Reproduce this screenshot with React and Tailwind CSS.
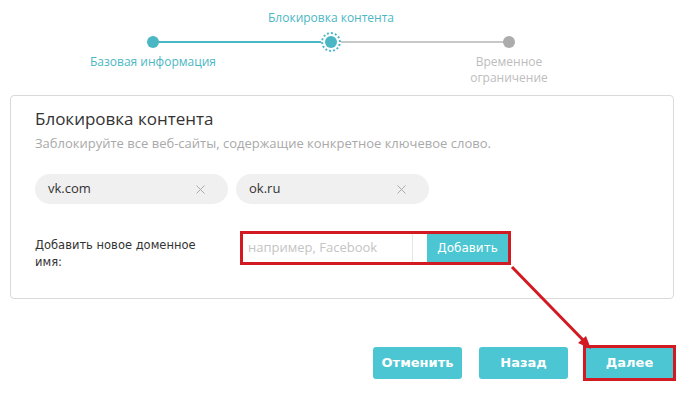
import { X } from "lucide-react";

const TEAL = "bg-[#4cc6d2]";

function Step({ top, bottom, left, right, active, done }) {
  return (
    <div className="w-[178px] flex flex-col items-center">
      <div className="h-[16px] mt-[10px] text-[12px] leading-[16px] text-[#4bb7c4]">{top}</div>
      <div className="relative w-full h-[24px] mt-[4px] flex items-center justify-center">
        <div className={`absolute left-0 w-1/2 h-[2px] ${left || "bg-transparent"}`} />
        <div className={`absolute right-0 w-1/2 h-[2px] ${right || "bg-transparent"}`} />
        {active ? (
          <div className="relative w-[20px] h-[20px] rounded-full border-2 border-dotted border-[#4bb7c4] bg-white flex items-center justify-center">
            <div className="w-[12px] h-[12px] rounded-full bg-[#4bb7c4]" />
          </div>
        ) : (
          <div className={`relative w-[12px] h-[12px] rounded-full ${done ? "bg-[#4bb7c4]" : "bg-[#acacac]"}`} />
        )}
      </div>
      <div className={`text-[12px] leading-[16px] text-center ${done ? "text-[#4bb7c4]" : "text-[#bdbdbd]"}`}>{bottom}</div>
    </div>
  );
}

function Pill({ label }) {
  return (
    <div className="w-[193px] h-[30px] rounded-full bg-[#f0f0f0] flex items-center justify-between pl-[13px] pr-[20px]">
      <span className="text-[13px] text-[#333]">{label}</span>
      <X className="w-[15px] h-[15px] text-[#a8a8a8]" strokeWidth={1.5} />
    </div>
  );
}

export default function App() {
  return (
    <div className="relative w-[696px] h-[395px] bg-white overflow-hidden" style={{ fontFamily: '"Open Sans", "DejaVu Sans", sans-serif' }}>
      <div className="h-[95px] flex pl-[64px]">
        <Step bottom="Базовая информация" right="bg-[#4bb7c4]" done />
        <Step top="Блокировка контента" left="bg-[#4bb7c4]" right="bg-[#c8c8c8]" active />
        <Step bottom={<>Временное<br />ограничение</>} left="bg-[#c8c8c8]" />
      </div>

      <div className="ml-[10px] w-[664px] h-[204px] border border-[#d9d9d9] rounded-[4px] pl-[24px] pt-[11px]">
        <div className="text-[17px] leading-[24px] text-[#333]">Блокировка контента</div>
        <div className="mt-[3px] text-[13px] leading-[18px] text-[#a9a9a9]">Заблокируйте все веб-сайты, содержащие конкретное ключевое слово.</div>
        <div className="mt-[22px] flex gap-[8px]">
          <Pill label="vk.com" />
          <Pill label="ok.ru" />
        </div>
        <div className="mt-[27px] flex items-start">
          <div className="w-[205px] mt-[6px] text-[11.5px] leading-[17px] text-[#333]" style={{ fontFamily: '"DejaVu Sans", sans-serif' }}>
            Добавить новое доменное<br />имя:
          </div>
          <div className="w-[271px] h-[34px] border-[3px] border-[#d21a22] flex items-center bg-white">
            <div className="flex-1 h-full flex items-center pl-[5px] border-r border-[#e6e6e6] text-[13px] text-[#c4c4c4]">
              например, Facebook
            </div>
            <div className="ml-[14px] w-[81px] h-[28px] bg-[#4cc6d2] text-white text-[12px] flex items-center justify-center" style={{ fontFamily: '"DejaVu Sans", sans-serif' }}>
              Добавить
            </div>
          </div>
        </div>
      </div>

      <div className="mt-[48px] flex justify-end gap-[17px] pr-[22px]" style={{ fontFamily: '"DejaVu Sans", sans-serif' }}>
        <div className={`w-[89px] h-[32px] rounded-[3px] ${TEAL} text-white text-[13px] font-bold flex items-center justify-center`}>Отменить</div>
        <div className={`w-[89px] h-[32px] rounded-[3px] ${TEAL} text-white text-[13px] font-bold flex items-center justify-center`}>Назад</div>
        <div className="w-[93px] h-[36px] -m-[2px] border-[3px] border-[#d21a22] flex">
          <div className={`flex-1 ${TEAL} text-white text-[13px] font-bold flex items-center justify-center`}>Далее</div>
        </div>
      </div>

      <svg className="absolute left-0 top-0 pointer-events-none" width="696" height="395">
        <line x1="512" y1="267" x2="585" y2="342" stroke="#d21a22" strokeWidth="3" />
        <polygon points="591,349 578,343 586,336" fill="#d21a22" />
      </svg>
    </div>
  );
}
